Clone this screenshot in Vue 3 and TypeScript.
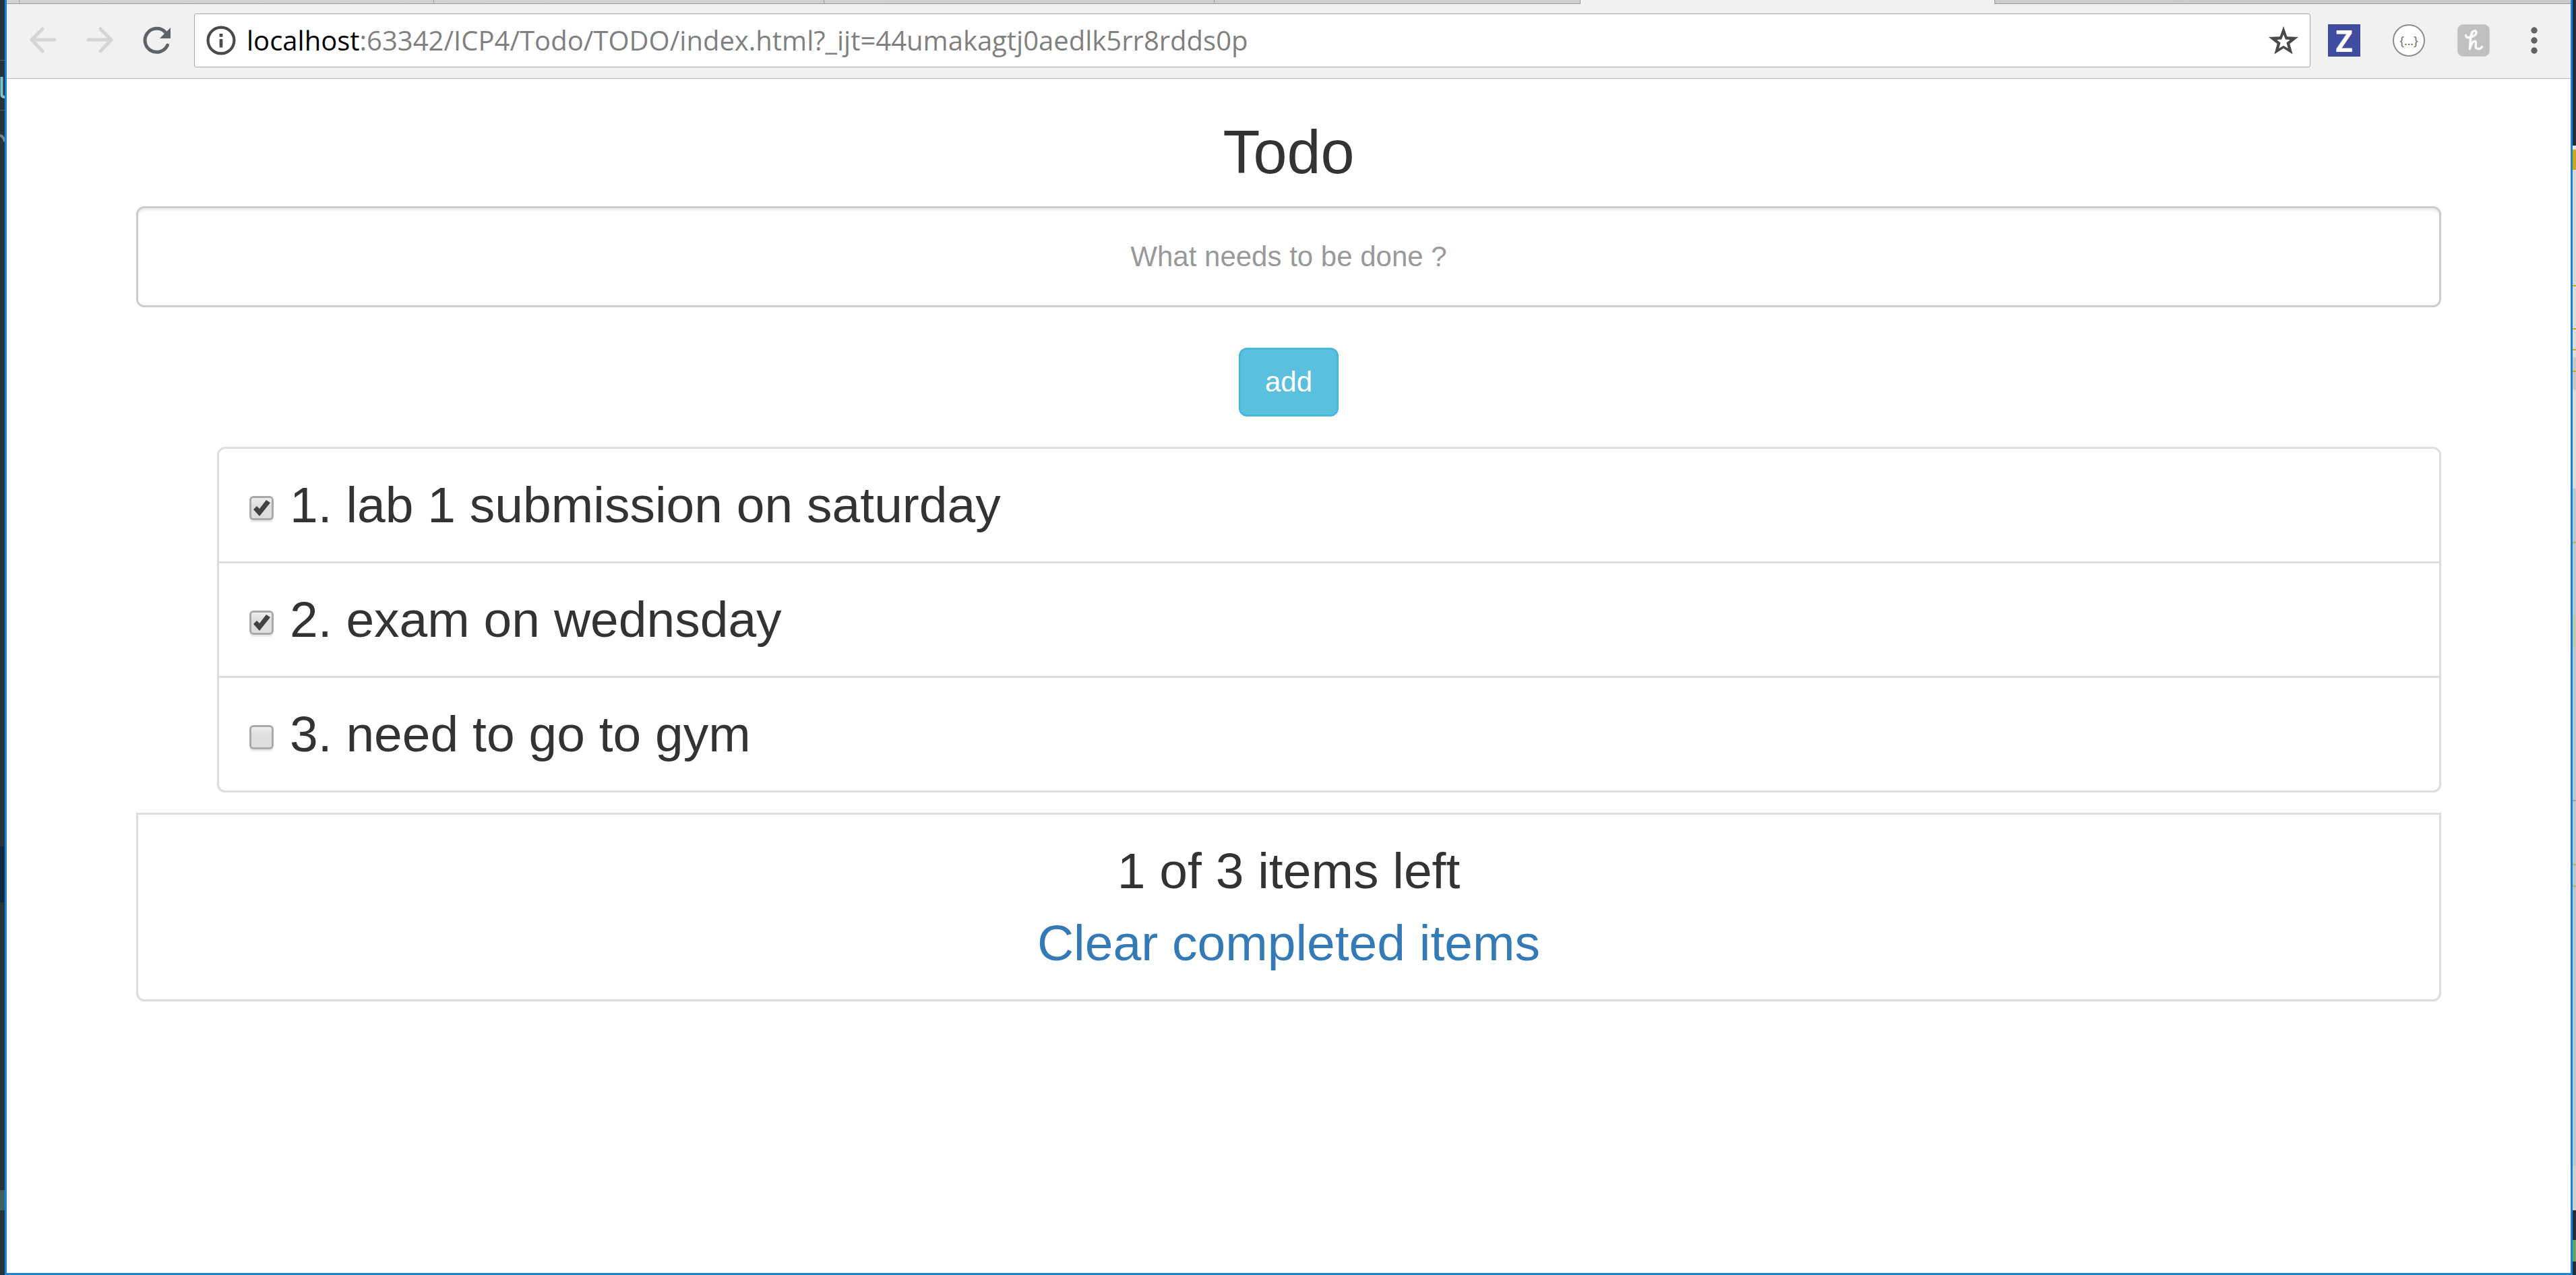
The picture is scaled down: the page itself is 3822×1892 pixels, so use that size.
<script setup lang="ts">
import { computed, ref } from 'vue'

interface Todo {
  id: number
  text: string
  done: boolean
}

const draft = ref('')
const todos = ref<Todo[]>([
  { id: 1, text: 'lab 1 submission on saturday', done: true },
  { id: 2, text: 'exam on wednsday', done: true },
  { id: 3, text: 'need to go to gym', done: false },
])

const remaining = computed(() => todos.value.filter((t) => !t.done).length)

function addTodo(): void {
  const text = draft.value.trim()
  if (!text) return
  todos.value.push({ id: Date.now(), text, done: false })
  draft.value = ''
}

function clearCompleted(): void {
  todos.value = todos.value.filter((t) => !t.done)
}
</script>

<template>
  <div class="desktop">
    <div class="behind behind-left" aria-hidden="true">
      <svg width="7" height="240" viewBox="0 0 7 240">
        <path d="M0 89.500H7M0 163.500H7" stroke="#54626a" />
        <path d="M2.500 114V140Q2.500 144 7 144" fill="none" stroke="#7cc5c9" stroke-width="4" />
        <path d="M0 201Q5 202 7 210" fill="none" stroke="#77858b" stroke-width="4" />
      </svg>
    </div>

    <div class="window">
      <div class="tabs" aria-hidden="true">
        <div class="tab first"></div>
        <div class="tab"></div>
        <div class="tab"></div>
        <div class="tab last"></div>
        <div class="tab active"></div>
        <div class="tab rest"></div>
      </div>

      <header class="toolbar">
        <nav class="nav" aria-label="Browser">
          <button type="button" class="icon-btn" aria-label="Back" disabled>
            <svg viewBox="0 0 48 48" fill="none" stroke="#d3d5d7" stroke-width="5" stroke-linecap="round" stroke-linejoin="round">
              <path d="M41 23H7M23 7L7 23L23 40" />
            </svg>
          </button>
          <button type="button" class="icon-btn" aria-label="Forward" disabled>
            <svg viewBox="0 0 48 48" fill="none" stroke="#d3d5d7" stroke-width="5" stroke-linecap="round" stroke-linejoin="round">
              <path d="M7 23H41M25 7L41 23L25 40" />
            </svg>
          </button>
          <button type="button" class="icon-btn" aria-label="Reload">
            <svg viewBox="0 0 48 48">
              <path d="M40.500 31A17.500 17.500 0 1 1 37 11.500" fill="none" stroke="#5f6368" stroke-width="5" stroke-linecap="round" />
              <path d="M45 5V21H29Z" fill="#5f6368" />
            </svg>
          </button>
        </nav>

        <div class="omnibox">
          <button type="button" class="icon-btn small" aria-label="Site information">
            <svg viewBox="0 0 42 42">
              <circle cx="21" cy="21" r="18.500" fill="none" stroke="#4a4a4a" stroke-width="4" />
              <path d="M21 11.500V16M21 19V31" stroke="#4a4a4a" stroke-width="4.500" />
            </svg>
          </button>
          <div class="url" role="textbox" aria-label="Address" contenteditable="true" spellcheck="false"><span class="host">localhost</span>:63342/ICP4/Todo/TODO/index.html?_ijt=44umakagtj0aedlk5rr8rdds0p</div>
          <button type="button" class="icon-btn small" aria-label="Bookmark this page">
            <svg viewBox="0 0 45 45">
              <path d="M22.500 1L28 16.500L45 17.500L32 27.500L36.500 43.500L22.500 34.500L8.500 43.500L13 27.500L0 17.500L17 16.500ZM22.500 13.500L19.500 21L12.500 21.500L18 26L15.500 34.500L22.500 30.500L29.500 34.500L27 26L32.500 21.500L25.500 21Z" fill="#4a4a4a" fill-rule="evenodd" />
            </svg>
          </button>
        </div>

        <div class="extensions">
          <button type="button" class="icon-btn ext-z">Z</button>
          <button type="button" class="icon-btn ext-json">{...}</button>
          <button type="button" class="icon-btn" aria-label="Honey">
            <svg viewBox="0 0 48 48">
              <rect x="0.500" y="0.500" width="47" height="47" rx="8" fill="#c0c0c0" stroke="#cbcbcb" />
              <path d="M12.500 16.500Q13 20.500 18 19.500C25 18 29 14.500 28 11.500C27 8.500 22.500 9.500 21 14C19.500 19 19 28 18.500 36.500C20 29 23.500 24.500 26 25C29.500 26 25.500 33 28 35.500C30.500 37.500 35 36.500 36.500 33.500" fill="none" stroke="#fafafa" stroke-width="3.500" stroke-linecap="round" stroke-linejoin="round" />
            </svg>
          </button>
          <button type="button" class="icon-btn menu" aria-label="Menu">
            <svg viewBox="0 0 36 48" fill="#5f6368">
              <circle cx="18" cy="9" r="4.700" />
              <circle cx="18" cy="24" r="4.700" />
              <circle cx="18" cy="39" r="4.700" />
            </svg>
          </button>
        </div>
      </header>

      <main class="page">
        <div class="container">
          <form class="todo-form" @submit.prevent="addTodo">
            <h1><label for="new-todo">Todo</label></h1>
            <input id="new-todo" v-model="draft" class="new-todo" type="text" placeholder="What needs to be done ?" />
            <button type="submit" class="add">add</button>
          </form>

          <ul class="list">
            <li v-for="(todo, index) in todos" :key="todo.id" class="item">
              <input :id="`todo-${todo.id}`" v-model="todo.done" type="checkbox" />
              <label :for="`todo-${todo.id}`">{{ index + 1 }}. {{ todo.text }}</label>
            </li>
          </ul>

          <footer class="summary">
            <div>{{ remaining }} of {{ todos.length }} items left</div>
            <a href="#" @click.prevent="clearCompleted">Clear completed items</a>
          </footer>
        </div>
      </main>
    </div>

    <div class="behind behind-right" aria-hidden="true"></div>
  </div>
</template>

<style>
body {
  margin: 0;
}
</style>

<style scoped>
* {
  box-sizing: border-box;
}

.desktop {
  display: flex;
  min-height: 100vh;
  font-family: "Liberation Sans", Arial, sans-serif;
  color: #333;
}

.behind {
  flex: none;
}

.behind svg {
  display: block;
}

.behind-left {
  width: 7px;
  background: linear-gradient(#263238 1256px, #0b2a40 1256px 1339px, #263238 1339px 1766px, #3d5f60 1766px 1796px, #263238 1796px);
}

.behind-right {
  width: 5px;
  background: linear-gradient(
    #222d32 216px, #e6e6e6 216px 222px, #ccac00 222px 252px,
    #d8d8d8 252px 423px, #ccac00 423px 425px, #dcdcdc 425px 487px,
    #ccac00 487px 489px, #dcdcdc 489px 518px, #ccac00 518px 520px,
    #dcdcdc 520px 530px, #c8c8c8 530px 550px, #ccac00 550px 552px,
    #c8c8c8 552px 578px, #dcdcdc 578px 725px, #b9cccb 725px 804px,
    #bdb848 804px 806px, #b9cccb 806px 913px, #bccbb0 913px 961px,
    #b9cccb 961px 1187px, #93a2a2 1187px 1189px, #b9cccb 1189px 1282px,
    #bdb848 1282px 1284px, #b9cccb 1284px 1314px, #bdb848 1314px 1316px,
    #b9cccb 1316px 1730px, #d0d0d0 1730px 1796px, #222d32 1796px 1840px,
    #62a565 1840px 1872px, #222d32 1872px
  );
}

.window {
  flex: 1;
  min-width: 0;
  display: flex;
  flex-direction: column;
  border: solid #1a82d8;
  border-width: 0 3px 3px;
  background: #fff;
}

.tabs {
  display: flex;
  height: 6px;
  padding-left: 18px;
  background: linear-gradient(90deg, #d3d3d3, #cbcbcb);
  box-shadow: inset 0 -1px #999;
}

.tab {
  flex: 579 1 0;
  border-left: 1px solid #999;
  border-bottom-left-radius: 4px;
}

.tab.first {
  flex-grow: 615;
  border-left-color: #a5a5a5;
}

.tab.last {
  flex-grow: 543;
}

.tab.active {
  flex-grow: 615;
  background: #f1f1f1;
  border-bottom-left-radius: 0;
}

.tab.rest {
  flex-grow: 855;
}

.toolbar {
  display: flex;
  align-items: center;
  padding: 14px 36px 16px 30px;
  background: #f1f1f1;
  border-bottom: 1px solid #b4b4b4;
}

.nav {
  display: flex;
  gap: 36px;
  margin-right: 32px;
}

.icon-btn {
  flex: none;
  width: 48px;
  height: 48px;
  padding: 0;
  border: 0;
  background: none;
}

.icon-btn svg {
  display: block;
  width: 100%;
  height: 100%;
}

.icon-btn.small {
  width: 44px;
  height: 44px;
}

.omnibox {
  flex: 1;
  min-width: 0;
  display: flex;
  align-items: center;
  gap: 16px;
  height: 80px;
  padding: 0 17px;
  border: 1px solid #a8a8a8;
  border-radius: 3px;
  background: #fff;
}

.url {
  flex: 1;
  min-width: 0;
  overflow: hidden;
  white-space: nowrap;
  font-family: "Open Sans", "Noto Sans", sans-serif;
  font-size: 40px;
  line-height: 60px;
  color: #808080;
}

.host {
  color: #000;
}

.extensions {
  display: flex;
  gap: 48px;
  margin-left: 26px;
}

.ext-z {
  background: #3f4c9f;
  color: #fff;
  font: 700 44px/48px "Noto Sans", sans-serif;
}

.ext-json {
  border: 2px solid #8c8c8c;
  border-radius: 50%;
  background: #fff;
  color: #666;
  font: 18px/40px "Open Sans", sans-serif;
}

.icon-btn.menu {
  width: 36px;
}

.page {
  flex: 1;
}

.container {
  max-width: 3510px;
  margin: 0 auto;
  padding: 0 45px;
}

.todo-form {
  display: flex;
  flex-direction: column;
  align-items: center;
}

h1 {
  margin: 60px 0 30px;
  font-size: 90px;
  font-weight: 500;
  line-height: 99px;
}

.new-todo {
  width: 100%;
  height: 150px;
  padding: 18px 36px;
  border: 3px solid #ccc;
  border-radius: 12px;
  background: #fff;
  box-shadow: inset 0 3px 3px rgba(0, 0, 0, 0.075);
  font: 42px/60px "Liberation Sans", Arial, sans-serif;
  color: #555;
  text-align: center;
}

.new-todo::placeholder {
  color: #999;
  opacity: 1;
}

.add {
  margin: 60px 0 45px;
  padding: 18px 36px;
  border: 3px solid #46b8da;
  border-radius: 12px;
  background: #5bc0de;
  font: 42px/60px "Liberation Sans", Arial, sans-serif;
  color: #fff;
}

.list {
  margin: 0 0 30px;
  padding: 0 0 0 120px;
  list-style: none;
}

.item,
.summary {
  padding: 30px 45px;
  border: 3px solid #ddd;
  background: #fff;
  font-size: 75px;
  line-height: 107px;
}

.item + .item {
  margin-top: -3px;
}

.item:first-child {
  border-radius: 12px 12px 0 0;
}

.item:last-child {
  border-radius: 0 0 12px 12px;
}

.item input {
  appearance: none;
  width: 36px;
  height: 36px;
  margin: 0 24px 3px 0;
  border: 3px solid #a9a9a9;
  border-radius: 6px;
  background: linear-gradient(#ededed, #dedede 40%);
  box-shadow: 0 3px rgba(0, 0, 0, 0.08);
  vertical-align: baseline;
}

.item input:checked::before {
  content: "";
  display: block;
  width: 30px;
  height: 30px;
  background: #424242;
  clip-path: polygon(3px 17px, 8px 12px, 12px 16px, 22px 3px, 28px 7px, 12px 27px);
}

.summary {
  border-radius: 0 0 12px 12px;
  text-align: center;
}

.summary a {
  color: #337ab7;
  text-decoration: none;
}
</style>
